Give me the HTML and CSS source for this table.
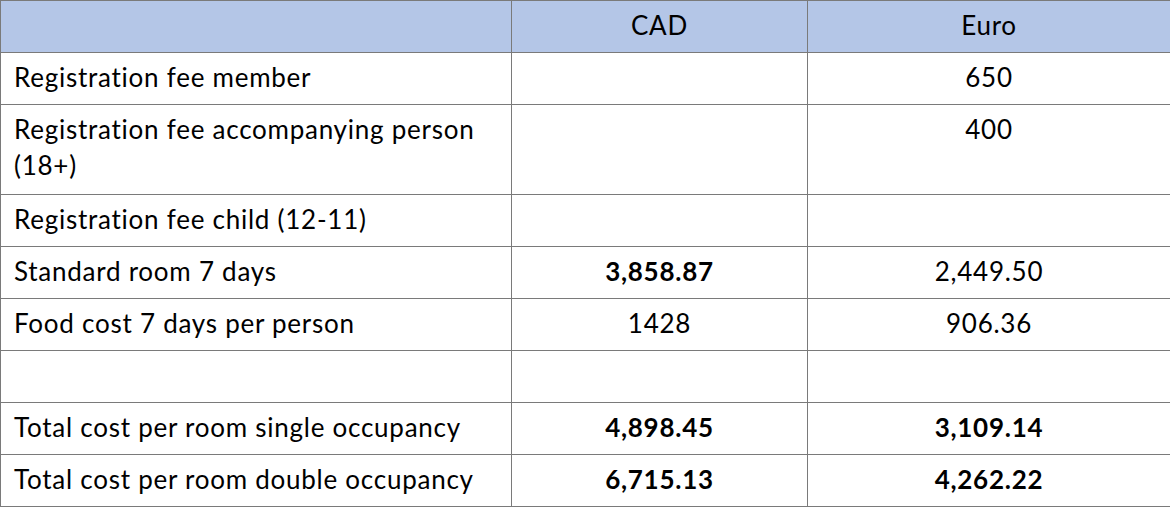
FILE: index.html
```html
<!DOCTYPE html>
<html lang="en">
<head>
<meta charset="utf-8">
<title>Costs</title>
<link rel="stylesheet" href="styles.css">
</head>
<body>
<table class="costs">
  <colgroup>
    <col class="col-label">
    <col class="col-cad">
    <col class="col-euro">
  </colgroup>
  <thead>
    <tr class="head-row">
      <th class="label"></th>
      <th class="num">CAD</th>
      <th class="num">Euro</th>
    </tr>
  </thead>
  <tbody>
    <tr class="row">
      <td class="label">Registration fee member</td>
      <td class="num"></td>
      <td class="num">650</td>
    </tr>
    <tr class="row tall">
      <td class="label">Registration fee accompanying person<br>(18+)</td>
      <td class="num"></td>
      <td class="num">400</td>
    </tr>
    <tr class="row">
      <td class="label">Registration fee child (12-11)</td>
      <td class="num"></td>
      <td class="num"></td>
    </tr>
    <tr class="row">
      <td class="label">Standard room 7 days</td>
      <td class="num strong">3,858.87</td>
      <td class="num">2,449.50</td>
    </tr>
    <tr class="row">
      <td class="label">Food cost 7 days per person</td>
      <td class="num">1428</td>
      <td class="num">906.36</td>
    </tr>
    <tr class="row">
      <td class="label"></td>
      <td class="num"></td>
      <td class="num"></td>
    </tr>
    <tr class="row">
      <td class="label">Total cost per room single occupancy</td>
      <td class="num strong">4,898.45</td>
      <td class="num strong">3,109.14</td>
    </tr>
    <tr class="row">
      <td class="label">Total cost per room double occupancy</td>
      <td class="num strong">6,715.13</td>
      <td class="num strong">4,262.22</td>
    </tr>
  </tbody>
</table>
</body>
</html>
```

FILE: styles.css
```css
html, body {
  margin: 0;
  padding: 0;
  background: #ffffff;
}

body {
  font-family: Lato, "Open Sans", "Liberation Sans", sans-serif;
  font-size: 26px;
  letter-spacing: 0.75px;
  color: #000000;
}

.costs {
  width: 1170px;
  border-collapse: collapse;
  table-layout: fixed;
}

.col-label { width: 511px; }
.col-cad { width: 296px; }
.col-euro { width: 363px; }

.costs th,
.costs td {
  border: 1px solid #7a7a7a;
  padding: 6px 10px 6px 13px;
  line-height: 36px;
  vertical-align: top;
  font-weight: 400;
}

.costs .num {
  padding-left: 10px;
  padding-right: 10px;
}

.head-row {
  height: 52px;
  background: #b4c6e7;
}

.row {
  height: 52px;
}

.row.tall {
  height: 90px;
}

.label {
  text-align: left;
}

.num {
  text-align: center;
}

.costs td.strong {
  font-weight: 700;
}
```
